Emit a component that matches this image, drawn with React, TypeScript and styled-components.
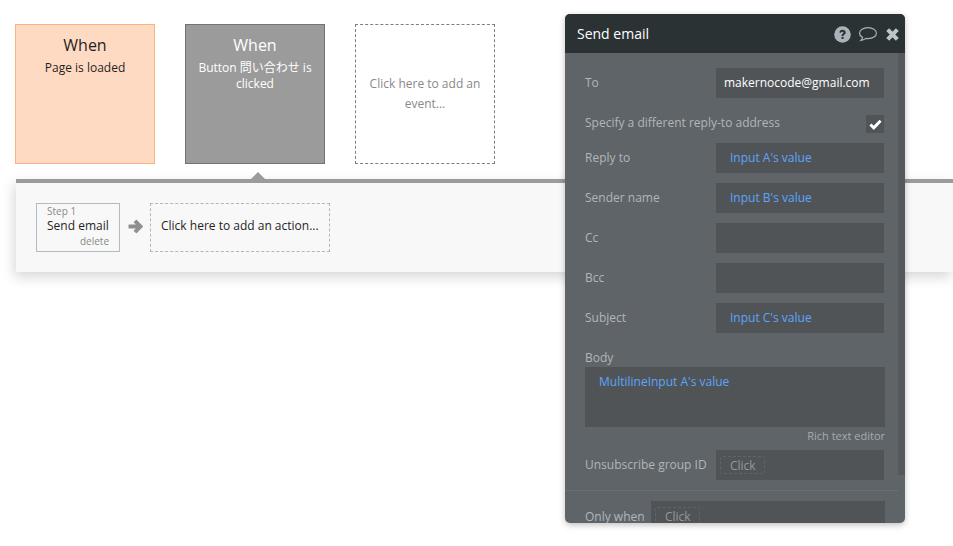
import * as React from 'react';
import styled, { createGlobalStyle } from 'styled-components';

const GlobalStyle = createGlobalStyle`
    html, body {
        margin: 0;
        padding: 0;
        background: #ffffff;
        font-family: "Open Sans", "Noto Sans CJK JP", sans-serif;
    }
    #root {
        width: 953px;
        height: 546px;
        overflow: hidden;
    }
`;

const Page = styled.div`
    position: relative;
    width: 953px;
    height: 546px;
    overflow: hidden;
    padding-top: 24px;
    box-sizing: border-box;
`;

const EventRow = styled.div`
    display: flex;
    gap: 30px;
    padding-left: 15px;
`;

type EventCardProps = {
    $variant: 'page' | 'active' | 'empty';
}

const EventCard = styled.div<EventCardProps>`
    width: 140px;
    height: 140px;
    box-sizing: border-box;
    text-align: center;
    padding: 8px 10px 0;
    background: ${({ $variant }) => $variant === 'page' ? '#ffdac3' : $variant === 'active' ? '#9b9b9b' : '#ffffff'};
    border: 1px ${({ $variant }) => $variant === 'empty' ? 'dashed' : 'solid'};
    border-color: ${({ $variant }) => $variant === 'page' ? '#fbb183' : $variant === 'active' ? '#737373' : '#7f7f7f'};
    color: ${({ $variant }) => $variant === 'active' ? '#ffffff' : '#1f1f1f'};
`;

const EventTitle = styled.div`
    font-size: 16px;
    line-height: 24px;
`;

const EventText = styled.div`
    font-size: 12px;
    line-height: 16px;
    margin-top: 3px;
`;

const AddEventText = styled.div`
    font-size: 12px;
    line-height: 20px;
    color: #888888;
    margin-top: 41px;
`;

const Timeline = styled.div`
    position: relative;
    margin: 15px 0 0 16px;
    height: 93px;
    box-sizing: border-box;
    border-top: 4px solid #9b9b9b;
    background: #f8f8f8;
    box-shadow: -2px 5px 12px rgba(0, 0, 0, 0.16);
    display: flex;
    align-items: flex-start;
    padding: 20px 0 0 20px;
`;

const Notch = styled.div`
    position: absolute;
    left: 235px;
    top: -11px;
    width: 0;
    height: 0;
    border-left: 7px solid transparent;
    border-right: 7px solid transparent;
    border-bottom: 7px solid #9b9b9b;
`;

const StepCard = styled.div`
    width: 84px;
    height: 49px;
    box-sizing: border-box;
    border: 1px solid #b1bcc2;
    padding: 1px 10px 0;
    color: #1f1f1f;
`;

const StepLabel = styled.div`
    font-size: 10px;
    line-height: 13px;
    color: #888888;
`;

const StepName = styled.div`
    font-size: 12px;
    line-height: 16px;
    white-space: nowrap;
`;

const StepDelete = styled.div`
    font-size: 10px;
    line-height: 14px;
    color: #888888;
    text-align: right;
`;

const ArrowBox = styled.div`
    width: 30px;
    height: 47px;
    display: flex;
    align-items: center;
    justify-content: center;
`;

const AddAction = styled.div`
    width: 180px;
    height: 49px;
    box-sizing: border-box;
    border: 1px dashed #b4b4b4;
    font-size: 12px;
    line-height: 43px;
    padding-left: 10px;
    color: #1f1f1f;
    white-space: nowrap;
`;

const Panel = styled.div`
    position: absolute;
    left: 565px;
    top: 14px;
    width: 340px;
    height: 509px;
    border-radius: 5px;
    overflow: hidden;
    background: #5f6468;
    box-shadow: 0 2px 6px rgba(0, 0, 0, 0.25);
    display: flex;
    flex-direction: column;
`;

const PanelHeader = styled.div`
    flex: none;
    height: 39px;
    background: #2b3234;
    display: flex;
    align-items: center;
    padding: 0 5px 0 12px;
    color: #ffffff;
`;

const PanelTitle = styled.div`
    flex: 1;
    font-size: 14px;
    font-weight: 400;
`;

const HeaderIcons = styled.div`
    display: flex;
    align-items: center;
    gap: 7px;
    margin-top: 2px;
`;

const PanelBody = styled.div`
    flex: 1;
    position: relative;
    padding: 15px 20px 0;
    overflow: hidden;
`;

const ScrollTrack = styled.div`
    position: absolute;
    right: 0;
    top: 0;
    width: 7px;
    height: 422px;
    background: #55595c;
`;

const FieldRow = styled.div`
    display: flex;
    align-items: center;
    justify-content: space-between;
    height: 30px;
    margin-bottom: 10px;
    width: 299px;
`;

const CheckRow = styled(FieldRow)`
    height: 18px;
    margin: 17px 0 10px;
`;

const Label = styled.div`
    font-size: 12px;
    line-height: 16px;
    padding-bottom: 1px;
    color: #b0b6ba;
    white-space: nowrap;
`;

const CheckLabel = styled(Label)`
    padding-bottom: 2px;
`;

const OnlyLabel = styled(Label)`
    padding-bottom: 0;
    padding-top: 1px;
`;

type FieldBoxProps = {
    $wide?: boolean;
}

const FieldBox = styled.div<FieldBoxProps>`
    width: ${({ $wide }) => $wide ? '234px' : '168px'};
    height: 30px;
    box-sizing: border-box;
    background: #505457;
    display: flex;
    align-items: center;
    font-size: 12px;
    padding-left: 4px;
    flex: none;
`;

const EmailValue = styled.span`
    color: #ffffff;
    padding: 0 0 2px 4px;
`;

type DynamicValueProps = {
    $indent?: number;
}

const DynamicValue = styled.span<DynamicValueProps>`
    color: #5ca5fa;
    padding-left: ${({ $indent }) => $indent ?? 10}px;
    padding-bottom: 1px;
`;

const ClickHolder = styled.span`
    display: inline-flex;
    align-items: center;
    box-sizing: border-box;
    height: 18px;
    width: 45px;
    padding: 0 9px;
    border: 1px dashed #606468;
    border-radius: 3px;
    color: #93989c;
`;

const CheckBox = styled.div`
    width: 18px;
    height: 18px;
    background: #505457;
    display: flex;
    align-items: center;
    justify-content: center;
`;

const BodyLabel = styled(Label)`
    padding-bottom: 0;
    margin-top: 17px;
`;

const BodyBox = styled.div`
    width: 300px;
    height: 60px;
    margin-top: 1px;
    box-sizing: border-box;
    background: #505457;
    font-size: 12px;
    line-height: 16px;
    padding-top: 7px;
    color: #5ca5fa;
`;

const RichText = styled.div`
    width: 300px;
    text-align: right;
    font-size: 11px;
    line-height: 14px;
    margin: 2px 0 7px;
    color: #a6abaf;
`;

const Divider = styled.div`
    height: 1px;
    background: #6a6f73;
    margin: 0 -20px 10px;
    width: 333px;
`;

const OnlyRow = styled(FieldRow)`
    width: 300px;
    margin: 0;
`;

const HelpIcon = () => (
    <svg width="17" height="17" viewBox="0 0 16 16">
        <circle cx="8" cy="8" r="7.8" fill="#a9b4b9" />
        <path d="M5 6.200C5.100 4.500 6.400 3.500 8 3.500c1.700 0 3 1 3 2.500 0 1.100-.6 1.700-1.400 2.200-.5.350-.7.600-.7 1.100H7.100c0-1 .3-1.600 1-2.100.5-.350.8-.600.8-1 0-.500-.4-.800-1-.800-.600 0-1 .300-1.100.900z" fill="#2b3234" />
        <rect x="7.100" y="10.200" width="1.900" height="2" fill="#2b3234" />
    </svg>
);

const ChatIcon = () => (
    <svg width="20" height="17" viewBox="0 0 19 16" fill="none">
        <path d="M9.500 1.500c4.500 0 8 2.300 8 5.200s-3.500 5.200-8 5.200c-.700 0-1.300 0-2-.2-1.200 1-2.800 1.800-4.700 2 .8-.8 1.400-1.800 1.500-3C2.600 9.800 1.500 8.300 1.500 6.700c0-2.900 3.500-5.200 8-5.200z" stroke="#a9b4b9" strokeWidth="1.100" />
    </svg>
);

const CloseIcon = () => (
    <svg width="15" height="15" viewBox="0 0 14 14">
        <path d="M2.500 2.500l9 9M11.500 2.500l-9 9" stroke="#bcc5c9" strokeWidth="3.800" />
    </svg>
);

const CheckIcon = () => (
    <svg width="13" height="11" viewBox="0 0 12 10">
        <path d="M1.300 5l3.100 3.100 6.300-6.500" stroke="#ffffff" strokeWidth="2.700" fill="none" />
    </svg>
);

const StepArrow = () => (
    <svg width="15" height="15" viewBox="0 0 14 14">
        <path d="M.5 7h10.500M6.500 1.800l5.200 5.200-5.200 5.200" stroke="#8f8f8f" strokeWidth="3.600" fill="none" />
    </svg>
);

const App: React.FC = () => {
    return (
        <Page>
            <GlobalStyle />
            <EventRow>
                <EventCard $variant="page">
                    <EventTitle>When</EventTitle>
                    <EventText>Page is loaded</EventText>
                </EventCard>
                <EventCard $variant="active">
                    <EventTitle>When</EventTitle>
                    <EventText>Button 問い合わせ is clicked</EventText>
                </EventCard>
                <EventCard $variant="empty">
                    <AddEventText>Click here to add an event...</AddEventText>
                </EventCard>
            </EventRow>
            <Timeline>
                <Notch />
                <StepCard>
                    <StepLabel>Step 1</StepLabel>
                    <StepName>Send email</StepName>
                    <StepDelete>delete</StepDelete>
                </StepCard>
                <ArrowBox><StepArrow /></ArrowBox>
                <AddAction>Click here to add an action...</AddAction>
            </Timeline>
            <Panel>
                <PanelHeader>
                    <PanelTitle>Send email</PanelTitle>
                    <HeaderIcons>
                        <HelpIcon />
                        <ChatIcon />
                        <CloseIcon />
                    </HeaderIcons>
                </PanelHeader>
                <PanelBody>
                    <ScrollTrack />
                    <FieldRow>
                        <Label>To</Label>
                        <FieldBox><EmailValue>makernocode@gmail.com</EmailValue></FieldBox>
                    </FieldRow>
                    <CheckRow>
                        <CheckLabel>Specify a different reply-to address</CheckLabel>
                        <CheckBox><CheckIcon /></CheckBox>
                    </CheckRow>
                    <FieldRow>
                        <Label>Reply to</Label>
                        <FieldBox><DynamicValue>Input A's value</DynamicValue></FieldBox>
                    </FieldRow>
                    <FieldRow>
                        <Label>Sender name</Label>
                        <FieldBox><DynamicValue>Input B's value</DynamicValue></FieldBox>
                    </FieldRow>
                    <FieldRow>
                        <Label>Cc</Label>
                        <FieldBox />
                    </FieldRow>
                    <FieldRow>
                        <Label>Bcc</Label>
                        <FieldBox />
                    </FieldRow>
                    <FieldRow>
                        <Label>Subject</Label>
                        <FieldBox><DynamicValue>Input C's value</DynamicValue></FieldBox>
                    </FieldRow>
                    <BodyLabel>Body</BodyLabel>
                    <BodyBox><DynamicValue $indent={14}>MultilineInput A's value</DynamicValue></BodyBox>
                    <RichText>Rich text editor</RichText>
                    <FieldRow>
                        <Label>Unsubscribe group ID</Label>
                        <FieldBox><ClickHolder>Click</ClickHolder></FieldBox>
                    </FieldRow>
                    <Divider />
                    <OnlyRow>
                        <OnlyLabel>Only when</OnlyLabel>
                        <FieldBox $wide><ClickHolder>Click</ClickHolder></FieldBox>
                    </OnlyRow>
                </PanelBody>
            </Panel>
        </Page>
    );
};

export default App;
